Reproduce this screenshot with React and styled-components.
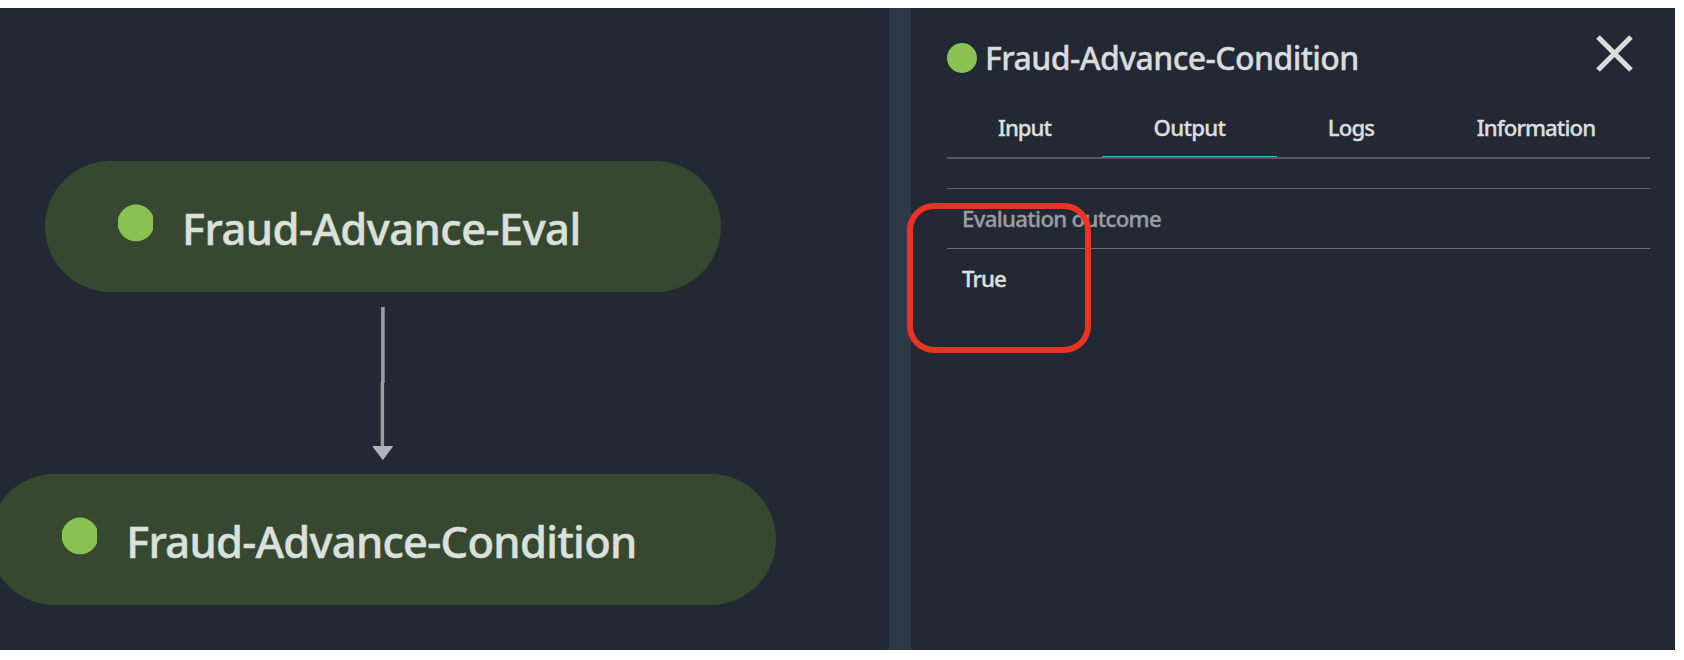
import React from "react";
import styled, { createGlobalStyle } from "styled-components";

const GlobalStyle = createGlobalStyle`
  *, *::before, *::after { box-sizing: border-box; }
  body { margin: 0; background: #fff; overflow: hidden; }
`;

const Page = styled.div`
  width: 1684px;
  height: 660px;
  padding: 8px 9px 10px 0;
  background: #fff;
  font-family: "Noto Sans", "Open Sans", sans-serif;
  font-weight: 500;
`;

const Workspace = styled.main`
  position: relative;
  display: grid;
  grid-template-columns: 889px 22px 1fr;
  height: 642px;
  background: #222934;
`;

const Canvas = styled.section`
  display: flex;
  flex-direction: column;
  align-items: center;
  width: 765.5px;
  padding-top: 153px;
`;

const Divider = styled.div`
  background: #2e3a47;
`;

const Node = styled.div`
  display: flex;
  flex: none;
  width: ${(p) => p.$width}px;
  height: 131px;
  padding: 43px 0 0 73px;
  border-radius: 66px;
  background: #364930;
`;

const NodeStatus = styled.svg`
  display: block;
  flex: none;
  width: 35px;
  height: 38px;
  margin-right: 29px;
`;

const NodeLabel = styled.span`
  color: #dce0dc;
  font-size: 43.5px;
  line-height: 48px;
  letter-spacing: ${(p) => p.$tracking}px;
  white-space: nowrap;
  -webkit-text-stroke: 0.5px currentColor;
`;

const Arrow = styled.svg`
  display: block;
  flex: none;
  width: 24px;
  height: 153px;
  margin: 15px 0 14px;
`;

const Panel = styled.aside`
  display: flex;
  flex-direction: column;
  padding: 0 25px 0 36px;
  -webkit-text-stroke: 0.35px currentColor;
`;

const PanelHeader = styled.header`
  display: flex;
  align-items: center;
  height: 99px;
`;

const StatusDot = styled.span`
  width: 30px;
  height: 30px;
  margin: 0 8px 0 0;
  border-radius: 50%;
  background: #8ac153;
`;

const Title = styled.h1`
  flex: 1;
  margin: 1px 0 0;
  color: #dadbdd;
  font-size: 32px;
  font-weight: 500;
  line-height: 40px;
  letter-spacing: ${(p) => p.$tracking}px;
`;

const CloseButton = styled.button`
  width: 38px;
  height: 38px;
  margin: 0 16px 7px 0;
  padding: 0;
  border: 0;
  background: none;

  svg { display: block; }
`;

const Tabs = styled.nav`
  display: flex;
  height: 52px;
  border-bottom: 2px solid #595b5a;
`;

const Tab = styled.button`
  width: ${(p) => p.$width}px;
  height: 50px;
  padding: 0 0 8px;
  border: 0;
  border-bottom: 1px solid ${(p) => (p.$active ? "#43b3e8" : "transparent")};
  background: none;
  color: #dcddde;
  font: inherit;
  font-size: 22.2px;
  line-height: 30px;
  letter-spacing: ${(p) => p.$tracking}px;
`;

const Table = styled.dl`
  margin: 29px 0 0;
  border-top: 1px solid #65635f;
`;

const TableHead = styled.dt`
  height: 60px;
  padding: 15px 15px 0;
  border-bottom: 1px solid #706d69;
  color: #999da2;
  font-size: 22.2px;
  line-height: 30px;
  letter-spacing: ${(p) => p.$tracking}px;
`;

const TableCell = styled.dd`
  margin: 0;
  padding: 15px 15px;
  color: #dfe0e1;
  font-size: 22.2px;
  line-height: 30px;
  letter-spacing: ${(p) => p.$tracking}px;
`;

const Highlight = styled.div`
  position: absolute;
  top: 195px;
  left: 907px;
  width: 184px;
  height: 150px;
  border: 6px solid #ec3323;
  border-radius: 27px;
`;

function StepNode({ label, width, tracking }) {
  return (
    <Node $width={width}>
      <NodeStatus viewBox="0 0 35 38">
        <circle cx="18" cy="18.9" r="18.4" fill="#8ac153" />
      </NodeStatus>
      <NodeLabel $tracking={tracking}>{label}</NodeLabel>
    </Node>
  );
}

const tabs = [
  { label: "Input", width: 155, tracking: -1 },
  { label: "Output", width: 175, tracking: -0.7 },
  { label: "Logs", width: 148, tracking: -0.9 },
  { label: "Information", width: 222, tracking: -0.9 },
];

export default function App() {
  return (
    <Page>
      <GlobalStyle />
      <Workspace>
        <Canvas>
          <StepNode label="Fraud-Advance-Eval" width={675.5} tracking={-0.53} />
          <Arrow viewBox="0 0 24 153">
            <path d="M11.9 0V76" stroke="#9b9ea2" strokeWidth="3.6" />
            <path d="M11.4 75V140" stroke="#9b9ea2" strokeWidth="3.4" />
            <path d="M2 139.5H21.5L11.8 152.5Z" fill="#b1b2b6" stroke="#b1b2b6" strokeLinejoin="round" />
          </Arrow>
          <StepNode label="Fraud-Advance-Condition" width={787} tracking={-0.72} />
        </Canvas>
        <Divider />
        <Panel>
          <PanelHeader>
            <StatusDot />
            <Title $tracking={-0.6}>Fraud-Advance-Condition</Title>
            <CloseButton aria-label="Close">
              <svg width="38" height="38" viewBox="0 0 38 38" fill="none" stroke="#dcdcdc" strokeWidth="5.2">
                <path d="M2 2L35 35M35 2L2 35" />
              </svg>
            </CloseButton>
          </PanelHeader>
          <Tabs>
            {tabs.map((tab) => (
              <Tab key={tab.label} $width={tab.width} $tracking={tab.tracking} $active={tab.label === "Output"}>
                {tab.label}
              </Tab>
            ))}
          </Tabs>
          <Table>
            <TableHead $tracking={-0.68}>Evaluation outcome</TableHead>
            <TableCell $tracking={-0.9}>True</TableCell>
          </Table>
        </Panel>
        <Highlight />
      </Workspace>
    </Page>
  );
}
